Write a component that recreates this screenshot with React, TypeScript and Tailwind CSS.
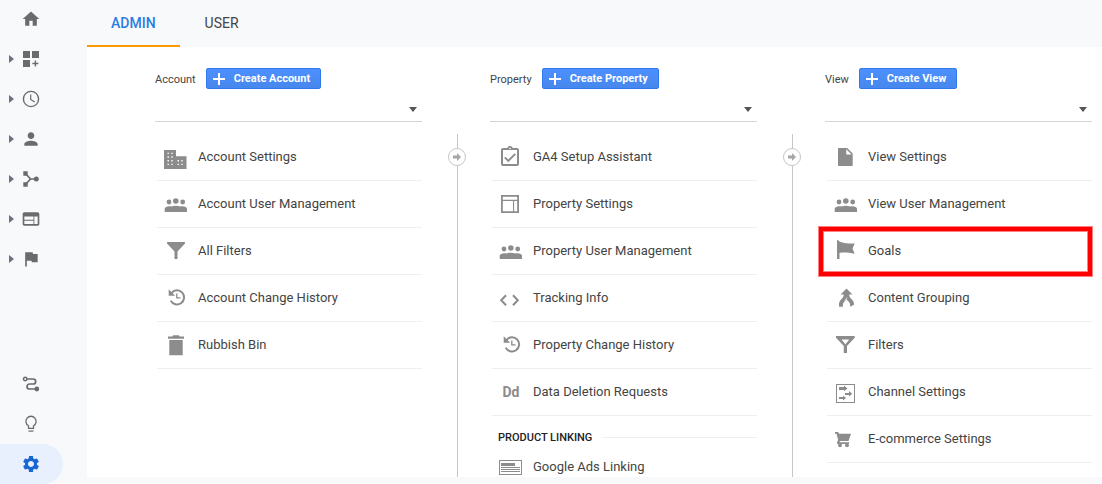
import type { ReactNode } from "react";
import { MdFlag, MdHome, MdPerson, MdSettings, MdWeb } from "react-icons/md";
import clsx from "clsx";

type NavItem = { label: string; icon: ReactNode; expandable?: boolean; active?: boolean };
type Row = { label: string; icon: ReactNode; highlighted?: boolean };

/* ---------- Icons ---------- */

function Glyph({ children }: { children: ReactNode }) {
  return (
    <svg viewBox="0 0 24 24" className="size-6 fill-current" aria-hidden="true">
      {children}
    </svg>
  );
}

function NavGlyph({ children }: { children: ReactNode }) {
  return (
    <svg viewBox="0 0 20 20" className="size-5 fill-current" aria-hidden="true">
      {children}
    </svg>
  );
}

const CustomizeIcon = () => (
  <NavGlyph>
    <path d="M2 2h7v7H2zM11 2h7v7h-7zM2 11h7v7H2z" />
    <path d="M13.7 11.5h1.4v2.3h2.3v1.4h-2.3v2.3h-1.4v-2.3h-2.3v-1.4h2.3z" />
  </NavGlyph>
);

const ClockIcon = () => (
  <NavGlyph>
    <g fill="none" stroke="currentColor" strokeWidth="1.4">
      <circle cx="10" cy="10" r="7.6" />
      <path d="M9.700 5.500v5l4 2.400" strokeWidth="1.200" />
    </g>
  </NavGlyph>
);

const AcquisitionIcon = () => (
  <NavGlyph>
    <path d="M2.3 2.3h4.4v4.4H2.3zM2.3 13.3h4.4v4.4H2.3z" />
    <path d="M4.5 4.5 9.5 10l-5 5.500M9.500 10H15" fill="none" stroke="currentColor" strokeWidth="1.7" />
    <circle cx="15.300" cy="10" r="2.500" />
  </NavGlyph>
);

const AttributionIcon = () => (
  <NavGlyph>
    <path
      d="M6 5h6.200a2.500 2.500 0 0 1 0 5H8.500a2.500 2.500 0 0 0 0 5H15"
      fill="none"
      stroke="currentColor"
      strokeWidth="1.700"
    />
    <circle cx="4.200" cy="5" r="1.700" fill="none" stroke="currentColor" strokeWidth="1.500" />
    <circle cx="15.800" cy="15" r="2.400" />
  </NavGlyph>
);

const BulbIcon = () => (
  <NavGlyph>
    <path
      d="M7.500 14.300v-2.500a5.100 5.100 0 1 1 5 0v2.500z"
      fill="none"
      stroke="currentColor"
      strokeWidth="1.300"
    />
    <path d="M7.500 16.500h5v1.200h-5z" />
  </NavGlyph>
);

const BuildingIcon = () => (
  <Glyph>
    <path d="M0 5h12v6.300h10.500V24H0z" />
    <path
      d="M3.500 7.700h1.400v1.400H3.500zM7.300 7.700h1.400v1.400H7.300zM3.500 11.300h1.400v1.400H3.500zM7.300 11.300h1.400v1.400H7.300zM3.500 15h1.400v1.400H3.500zM7.300 15h1.400v1.400H7.300zM3.500 18.700h1.400v1.400H3.500zM7.300 18.700h1.400v1.400H7.300zM13.600 15H15v1.400h-1.400zM17.300 15h1.400v1.400h-1.400zM13.600 18.700H15v1.400h-1.400zM17.300 18.700h1.400v1.400h-1.400z"
      fill="#fff"
    />
  </Glyph>
);

const UsersIcon = () => (
  <Glyph>
    <circle cx="5" cy="10" r="2.400" />
    <circle cx="11.800" cy="9" r="2.800" />
    <circle cx="18.700" cy="10" r="2.400" />
    <path d="M.7 20v-3.200c0-1.600 2.300-2.500 4.600-2.500.8 0 1.500.1 2.200.3 1.200-.5 2.800-.8 4.300-.8s3.100.3 4.300.8c.7-.2 1.500-.3 2.300-.3 2.300 0 4.600.9 4.600 2.500V20z" />
  </Glyph>
);

const FunnelIcon = () => (
  <Glyph>
    <path d="M3 3h18v1.500l-7.500 8V20h-3v-7.500L3 4.500z" />
  </Glyph>
);

const FunnelOutlineIcon = () => (
  <Glyph>
    <path fillRule="evenodd" d="M2 3h18.700v1.700L13 13v7h-3.200v-7L2 4.700zM7.500 6.500l3.900 4.700 3.900-4.700z" />
  </Glyph>
);

const HistoryIcon = () => (
  <Glyph>
    <path d="M4.700 3.300v6.400h6.400z" />
    <g fill="none" stroke="currentColor">
      <path d="M7.600 6.800a7.100 7.100 0 1 1-.9 7.800" strokeWidth="2" />
      <path d="M12.800 7.500v4.300h3.700" strokeWidth="1.300" />
    </g>
  </Glyph>
);

const BinIcon = () => (
  <Glyph>
    <path d="M9.300 2.300h5.400l1 1.200H20v2.200H4V3.500h4.300zM5.300 7h13.400v15.300H5.300z" />
  </Glyph>
);

const ClipboardIcon = () => (
  <Glyph>
    <path
      fillRule="evenodd"
      d="M20 5v14c0 1.100-.9 2-2 2H4c-1.100 0-2-.9-2-2V5c0-1.100.9-2 2-2h4.200a3 3 0 0 1 5.600 0H18c1.100 0 2 .9 2 2zM4 5v14h14V5zm6.200-2h1.600v1h-1.600z"
    />
    <path d="m5.800 12.300 3.500 3.500 7-7" fill="none" stroke="currentColor" strokeWidth="1.900" />
  </Glyph>
);

const LayoutIcon = () => (
  <Glyph>
    <path fillRule="evenodd" d="M2 3h18v18H2zM3.800 4.800v3h14.400v-3zM3.800 8.900v10.300H14V8.900zM15.100 8.900v10.300h3.100V8.900z" />
  </Glyph>
);

const CodeIcon = () => (
  <Glyph>
    <path d="M7 9.200 2.200 14.200 7 19.200M14 9.200l4.800 5-4.800 5" fill="none" stroke="currentColor" strokeWidth="2" />
  </Glyph>
);

const DataDeletionIcon = () => (
  <span className="flex size-6 items-center justify-center text-sm font-bold" aria-hidden="true">
    Dd
  </span>
);

const AdsIcon = () => (
  <Glyph>
    <path fillRule="evenodd" d="M0 5h23v15H0zM1 6v13h21V6z" />
    <path d="M2 8h14v3H2zM2 12h19v1H2zM2 14h19v1H2zM2 16h19v1H2z" />
  </Glyph>
);

const FileIcon = () => (
  <Glyph>
    <path fillRule="evenodd" d="M4 4c0-.6.400-1 1-1h8.200l5.500 5.500V20c0 .6-.4 1-1 1H5c-.6 0-1-.4-1-1zM12.300 4.200v5.200h5.200z" />
  </Glyph>
);

const GoalFlagIcon = () => (
  <Glyph>
    <path d="M3 1.300h1.500l.8 1.200c4.500 1.700 9.400 2.200 15.400 2.100l-2.200 4.900 2.200 5.200c-6-1-10.700-1.500-15.200-.7V20H3z" />
  </Glyph>
);

const MergeIcon = () => (
  <Glyph>
    <path d="M12.500 2.500 18.500 8.500h-3.300c.1 2.100.8 3.300 2.500 4.700 1.700 1.400 2.300 3.200 2.300 5.500l-3.800 2c0-3-.4-4.200-1.900-5.500-.8-.7-1.400-1.300-1.800-2-.4.700-1 1.300-1.800 2-1.300 1.300-1.900 2.500-1.900 5.500H5v-2c0-2.300.6-4.100 2.300-5.500 1.700-1.400 2.400-2.600 2.500-4.700H6.500z" />
    <path d="m10.800 14.500 2.400-2.700" stroke="#fff" strokeWidth=".8" />
  </Glyph>
);

const ChannelIcon = () => (
  <Glyph>
    <path fillRule="evenodd" d="M2 4h19v19H2zM3 5v17h17V5z" />
    <path d="M5 7h5V5.500L13.500 8.500 10 11.300V10H5zM11 13h4v-2l3.300 2.800L15 16.600V15h-4zM5 17h4v-1.600l3 2.600-3 2.600V19H5z" />
  </Glyph>
);

const CartIcon = () => (
  <Glyph>
    <path d="M1 5h3.200l.8 1.700h12L14.500 14H6l-.6 1.300H15V17H4.500c-1.300 0-2-1-1.400-2.100l1.100-2L2.500 6.700H1z" />
    <circle cx="6" cy="18.300" r="1.900" />
    <circle cx="13" cy="18.300" r="1.900" />
  </Glyph>
);

/* ---------- Data ---------- */

const topNav: NavItem[] = [
  { label: "Home", icon: <MdHome size={20} /> },
  { label: "Customisation", icon: <CustomizeIcon />, expandable: true },
  { label: "Real-time", icon: <ClockIcon />, expandable: true },
  { label: "Audience", icon: <MdPerson size={20} />, expandable: true },
  { label: "Acquisition", icon: <AcquisitionIcon />, expandable: true },
  { label: "Behaviour", icon: <MdWeb size={20} />, expandable: true },
  { label: "Conversions", icon: <MdFlag size={20} />, expandable: true },
];

const bottomNav: NavItem[] = [
  { label: "Attribution", icon: <AttributionIcon /> },
  { label: "Discover", icon: <BulbIcon /> },
  { label: "Admin", icon: <MdSettings size={20} />, active: true },
];

const accountRows: Row[] = [
  { label: "Account Settings", icon: <BuildingIcon /> },
  { label: "Account User Management", icon: <UsersIcon /> },
  { label: "All Filters", icon: <FunnelIcon /> },
  { label: "Account Change History", icon: <HistoryIcon /> },
  { label: "Rubbish Bin", icon: <BinIcon /> },
];

const propertyRows: Row[] = [
  { label: "GA4 Setup Assistant", icon: <ClipboardIcon /> },
  { label: "Property Settings", icon: <LayoutIcon /> },
  { label: "Property User Management", icon: <UsersIcon /> },
  { label: "Tracking Info", icon: <CodeIcon /> },
  { label: "Property Change History", icon: <HistoryIcon /> },
  { label: "Data Deletion Requests", icon: <DataDeletionIcon /> },
];

const viewRows: Row[] = [
  { label: "View Settings", icon: <FileIcon /> },
  { label: "View User Management", icon: <UsersIcon /> },
  { label: "Goals", icon: <GoalFlagIcon />, highlighted: true },
  { label: "Content Grouping", icon: <MergeIcon /> },
  { label: "Filters", icon: <FunnelOutlineIcon /> },
  { label: "Channel Settings", icon: <ChannelIcon /> },
  { label: "E-commerce Settings", icon: <CartIcon /> },
];

/* ---------- Pieces ---------- */

function NavLink({ label, icon, expandable, active }: NavItem) {
  return (
    <a
      href="#"
      aria-label={label}
      className={clsx(
        "flex h-10 w-[63px] items-center gap-[6px] rounded-r-full pl-[9px]",
        active ? "bg-[#e8f0fe] text-[#1967d2]" : "text-[#6b6b6b]"
      )}
    >
      <span className="w-[6px]">
        {expandable && (
          <svg viewBox="0 0 6 8" className="h-2 w-[6px] fill-[#696f85]" aria-hidden="true">
            <path d="M0 0l5 4-5 4z" />
          </svg>
        )}
      </span>
      {icon}
    </a>
  );
}

function MenuRow({ label, icon, highlighted }: Row) {
  return (
    <li className="relative">
      <a
        href="#"
        className="ml-[2px] flex h-[47px] items-center gap-[10px] border-b border-[#efefef] pl-[7px] text-[13px] text-[#444]"
      >
        <span className="shrink-0 text-[#8c8c8c]">{icon}</span>
        {label}
      </a>
      {highlighted && (
        <span className="pointer-events-none absolute -inset-y-px -left-[6px] right-0 z-10 border-4 border-[#fe0000] shadow-[0_0_0_1px_#ff8080,inset_0_0_0_1px_#ff8080]" />
      )}
    </li>
  );
}

function Column({ name, rows, children }: { name: string; rows: Row[]; children?: ReactNode }) {
  const id = `${name.toLowerCase()}-select`;
  return (
    <section className="min-w-0 flex-1 pt-[21px]">
      <div className="flex items-center gap-[10px] text-[11px] leading-4">
        <label htmlFor={id} className="pt-[2px] text-[#444]">
          {name}
        </label>
        <button
          type="button"
          className="flex h-[21px] items-center gap-[9px] rounded-[2px] border border-[#3079ed] bg-linear-to-b from-[#4d90fe] to-[#4787ed] pt-px pr-[10px] pl-[6px] font-bold whitespace-nowrap text-white"
        >
          <svg viewBox="0 0 12 12" className="size-3 fill-white" aria-hidden="true">
            <path d="M5 0h2v5h5v2H7v5H5V7H0V5h5z" />
          </svg>
          Create {name}
        </button>
      </div>
      <div className="relative mt-2">
        <select
          id={id}
          className="block h-[25px] w-full appearance-none border-b border-[#d4d4d4] bg-transparent text-[13px] text-[#444] outline-none"
        />
        <svg
          viewBox="0 0 8 5"
          className="pointer-events-none absolute top-[10px] right-[5px] h-[5px] w-2 fill-[#555]"
          aria-hidden="true"
        >
          <path d="M0 0h8L4 5z" />
        </svg>
      </div>
      <ul className="mt-3">
        {rows.map((row) => (
          <MenuRow key={row.label} {...row} />
        ))}
      </ul>
      {children}
    </section>
  );
}

function Divider() {
  return (
    <div className="flex w-[68px] shrink-0 flex-col items-center pt-[87px] pl-[2px]">
      <span className="h-[14px] w-px bg-[#c6c6c6]" />
      <span className="flex size-[18px] items-center justify-center rounded-full border border-[#c6c6c6]">
        <svg viewBox="0 0 8 8" className="size-2 fill-[#a6a6a6]" aria-hidden="true">
          <path d="M0 2.500h4V0l4 4-4 4V5.500H0z" />
        </svg>
      </span>
      <span className="w-px flex-1 bg-[#c6c6c6]" />
    </div>
  );
}

export default function App() {
  return (
    <div className="flex h-screen overflow-hidden bg-[#f8f9fb] font-[Roboto,sans-serif]">
      <nav className="flex w-[87px] shrink-0 flex-col justify-between" aria-label="Main">
        <div className="*:pb-[2px]">
          {topNav.map((item) => (
            <NavLink key={item.label} {...item} />
          ))}
        </div>
        <div>
          {bottomNav.map((item) => (
            <NavLink key={item.label} {...item} />
          ))}
        </div>
      </nav>

      <div className="flex min-w-0 flex-1 flex-col pb-[7px]">
        <header className="flex h-[47px] shrink-0 gap-px text-sm">
          <a
            href="#"
            className="flex items-center border-b-2 border-[#f90] px-6 font-medium text-[#2a7de1]"
          >
            ADMIN
          </a>
          <a href="#" className="flex items-center border-b-2 border-transparent px-6 text-[#444]">
            USER
          </a>
        </header>

        <main className="flex min-h-0 flex-1 overflow-hidden bg-white pr-[10px] pl-[68px]">
          <Column name="Account" rows={accountRows} />
          <Divider />
          <Column name="Property" rows={propertyRows}>
            <h2 className="flex h-7 items-center gap-[10px] pt-[15px] pl-2 text-[11px] leading-4 font-medium whitespace-nowrap text-[#222]">
              PRODUCT LINKING
              <span className="h-px flex-1 bg-[#efefef]" />
            </h2>
            <ul>
              <MenuRow label="Google Ads Linking" icon={<AdsIcon />} />
            </ul>
          </Column>
          <Divider />
          <Column name="View" rows={viewRows} />
        </main>
      </div>
    </div>
  );
}
